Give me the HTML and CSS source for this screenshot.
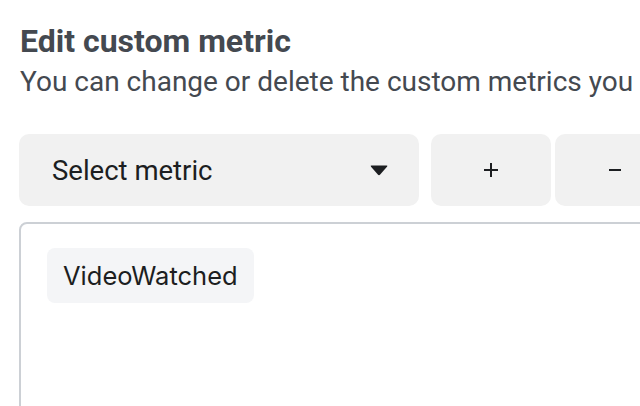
FILE: index.html
```html
<!DOCTYPE html>
<html>
<head>
<meta charset="utf-8">
<link rel="stylesheet" href="styles.css">
</head>
<body>
<div class="page">
  <h1 class="title">Edit custom metric</h1>
  <p class="subtitle">You can change or delete the custom metrics you created.</p>
  <div class="controls">
    <div class="select">
      <span class="select-label">Select metric</span>
      <svg class="caret" width="18" height="11" viewBox="0 0 18 11"><path d="M1.5 0.5 H16.5 Q18 0.5 17 1.8 L10.2 9.6 Q9 10.8 7.8 9.6 L1 1.8 Q0 0.5 1.5 0.5 Z" fill="#1c1e21"/></svg>
    </div>
    <div class="btn btn-add" aria-label="Add"><svg width="16" height="16" viewBox="0 0 16 16"><path d="M8 1 V15 M1 8 H15" stroke="#1c1e21" stroke-width="2"/></svg></div>
    <div class="btn btn-remove" aria-label="Remove"><svg width="12" height="4" viewBox="0 0 12 4"><path d="M0 2 H12" stroke="#1c1e21" stroke-width="2"/></svg></div>
  </div>
  <div class="box">
    <span class="chip">VideoWatched</span>
  </div>
</div>
</body>
</html>
```
FILE: styles.css
```css
html, body {
  margin: 0;
  padding: 0;
  background: #fff;
  overflow: hidden;
  width: 640px;
  height: 406px;
}
.page {
  padding: 22px 0 0 19px;
  font-family: Roboto, "Noto Sans", sans-serif;
  width: 800px;
}
.title {
  margin: 0 0 0 1px;
  font-size: 32px;
  font-weight: 700;
  line-height: 38px;
  color: #444950;
}
.subtitle {
  margin: 5px 0 0 1px;
  font-size: 28px;
  font-weight: 400;
  line-height: 34px;
  color: #444950;
  white-space: nowrap;
}
.controls {
  display: flex;
  margin-top: 35px;
  height: 72px;
}
.select {
  width: 400px;
  box-sizing: border-box;
  background: #f1f1f1;
  border-radius: 10px;
  display: flex;
  align-items: center;
  justify-content: space-between;
  padding: 0 31px 0 33px;
}
.select-label {
  font-size: 27.5px;
  color: #1c1e21;
}
.caret {
  display: block;
}
.btn {
  width: 120px;
  background: #f1f1f1;
  border-radius: 10px;
  display: flex;
  align-items: center;
  justify-content: center;
}
.btn svg {
  display: block;
}
.btn-add {
  margin-left: 12px;
}
.btn-remove {
  margin-left: 4px;
}
.box {
  margin-top: 16px;
  width: 700px;
  height: 220px;
  box-sizing: border-box;
  border: 2px solid #ccd0d5;
  border-radius: 8px;
  padding: 24px 26px;
}
.chip {
  display: inline-block;
  background: #f4f5f7;
  border-radius: 8px;
  padding: 12px 16px;
  font-family: Inter, sans-serif;
  font-size: 25.5px;
  line-height: 31px;
  color: #1c1e21;
}
```
